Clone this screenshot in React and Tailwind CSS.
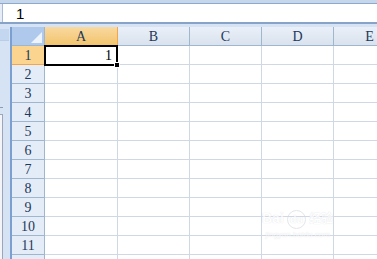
import React from 'react';

const cols = ['A', 'B', 'C', 'D', 'E'];
const rows = [1, 2, 3, 4, 5, 6, 7, 8, 9, 10, 11, 12];

const App = () => {
  return (
    <div className="relative w-[377px] h-[259px] overflow-hidden bg-[#d6e3f4] font-['Liberation_Serif',serif]">
      {/* top strip */}
      <div className="h-[4px] bg-[#c6d7ec] border-b border-[#8ea9cc]" />

      {/* formula bar */}
      <div className="flex h-[20px] bg-white border-b-2 border-[#87a3c8]">
        <div className="w-[3px] bg-[#e6edf6] border-r border-[#a7bcd6]" />
        <div className="pl-[13px] text-[15px] leading-[20px] text-black font-['Liberation_Sans',sans-serif]">1</div>
      </div>

      <div className="h-[3px] bg-[#d6e3f4]" />

      {/* sheet */}
      <div className="flex">
        {/* left panel remnant */}
        <div className="w-[10px] shrink-0 flex flex-col">
          <div className="h-[2px]" />
          <div className="h-[12px] w-[9px] bg-[#c3d7f0] border-b border-[#b9cde6]" />
          <div className="h-[66px]" />
          <div className="h-px w-[3px] bg-[#8c9bb0]" />
          <div className="h-[6px]" />
          <div className="flex-1 w-[3px] bg-[#f2f4f7] border border-l-0 border-[#9ba7b8]" />
        </div>
        <div className="w-[2px] shrink-0 bg-[#7c9fd2]" />

        {/* grid */}
        <div className="relative shrink-0 grid grid-cols-[33px_73px_72px_72px_72px_72px] auto-rows-[19px] bg-white">
          <div className="relative bg-[#afc9ec] border-r border-b border-[#9eb6ce]">
            <div className="absolute right-[2px] bottom-[2px] w-0 h-0 border-l-[11px] border-l-transparent border-b-[11px] border-b-[#eef4fc]" />
          </div>
          {cols.map((c, i) => (
            <div
              key={c}
              className={
                i === 0
                  ? 'flex items-center justify-center bg-gradient-to-b from-[#f9d99f] to-[#f2c46c] border-r border-b border-[#f2a54a] text-[14px] text-[#1e395b]'
                  : 'flex items-center justify-center bg-gradient-to-b from-[#eaf0f8] to-[#d9e2ee] border-r border-b border-[#9eb6ce] text-[14px] text-[#1e395b]'
              }
            >
              {c}
            </div>
          ))}

          {rows.map((r) => (
            <React.Fragment key={r}>
              <div
                className={
                  r === 1
                    ? 'flex items-center justify-center bg-[#fbd490] border-r border-b border-[#f2a54a] text-[14px] text-[#1e395b]'
                    : 'flex items-center justify-center bg-[#e4ecf7] border-r border-b border-[#9eb6ce] text-[14px] text-[#1e395b]'
                }
              >
                {r < 12 ? r : ''}
              </div>
              {cols.map((c) => (
                <div key={c} className="border-r border-b border-[#d0d7e5] flex items-center justify-end pr-[5px] text-[14px] text-black">
                  {r === 1 && c === 'A' ? '1' : ''}
                </div>
              ))}
            </React.Fragment>
          ))}

          {/* active cell A1 */}
          <div className="absolute left-[32px] top-[18px] w-[74px] h-[21px] border-2 border-black pointer-events-none" />
          <div className="absolute left-[102px] top-[35px] w-[6px] h-[6px] bg-black border border-white" />
        </div>
      </div>

      {/* watermark */}
      <div className="absolute left-[262px] top-[208px] flex flex-col items-center text-white opacity-70 [text-shadow:0_0_1px_#c8ccd4]">
        <div className="flex items-baseline gap-[3px] font-['Liberation_Sans','Noto_Sans_CJK_SC',sans-serif] font-bold">
          <span className="text-[14px]">Bai</span>
          <span className="text-[11px] rounded-full border border-[#d8dce3] px-[2px]">du</span>
          <span className="text-[12px]">经验</span>
        </div>
        <div className="text-[8px] font-['Liberation_Sans',sans-serif]">jingyan.baidu.com</div>
      </div>
    </div>
  );
};

export default App;
